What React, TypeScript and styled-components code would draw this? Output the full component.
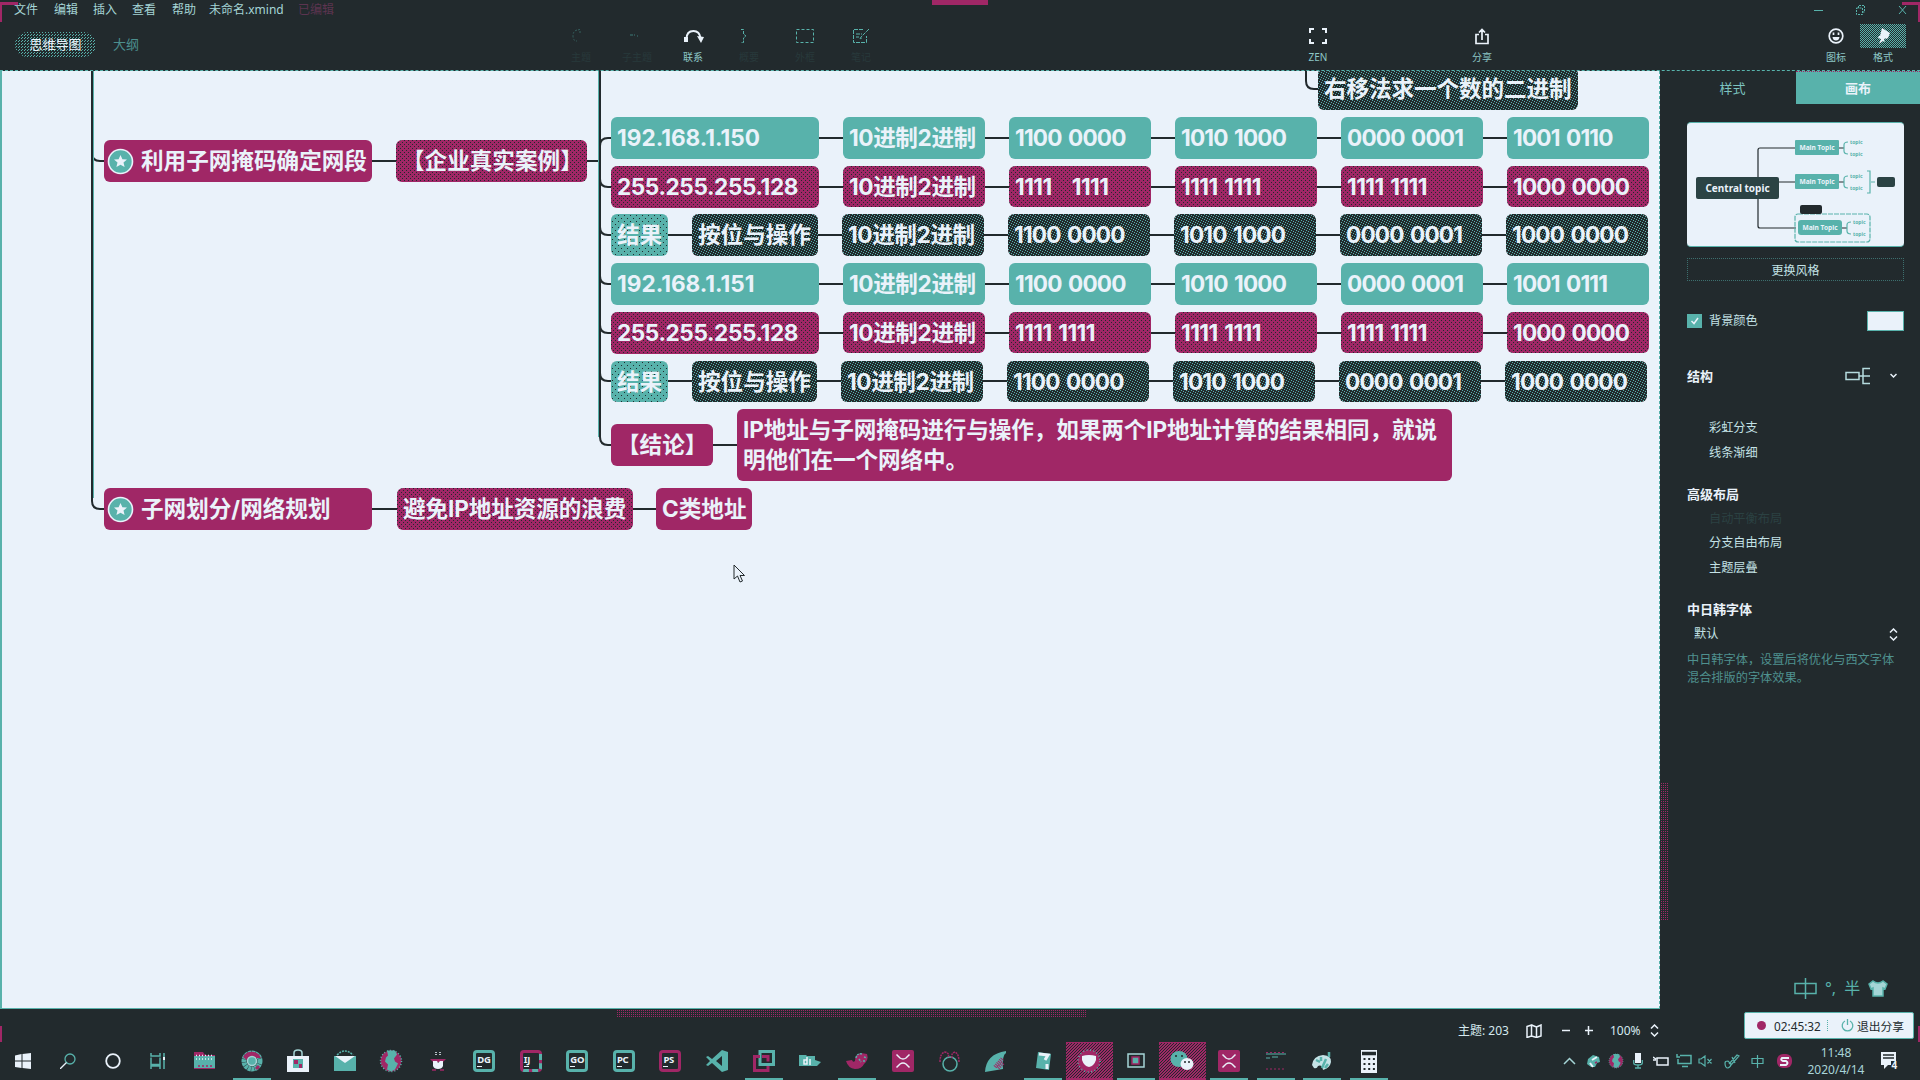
import React from 'react';
import styled, { createGlobalStyle, css } from 'styled-components';

const dark = '#222a2d';
const teal = '#58b2ab';
const plum = '#a02766';
const light = '#eaf2fa';
const dim = '#35605f';

const speckle = (color: string, size: number, points: number[][]) => css`
  background-image: ${points.map(() => `conic-gradient(from -90deg at 1px 1px, ${color} 90deg, transparent 0)`).join(',')};
  background-size: ${size}px ${size}px;
  background-position: ${points.map(([x, y]) => `${x}px ${y}px`).join(',')};
`;
const dense = [[0, 0], [2, 1], [4, 2], [1, 3], [3, 4]];
const checker = [[0, 0], [1, 1]];

const GlobalStyle = createGlobalStyle`
  * { box-sizing: border-box; }
  body { margin: 0; background: ${dark}; overflow: hidden; }
  svg { display: block; flex: none; }
`;

const Window = styled.div`
  width: 1920px;
  height: 1080px;
  display: flex;
  flex-direction: column;
  position: relative;
  background: ${dark};
  color: ${light};
  font: 12px/16px "Noto Sans", "Noto Sans CJK SC", sans-serif;
  white-space: pre;
`;

/* ---------- header ---------- */
const MenuBar = styled.div`
  height: 20px;
  display: flex;
  align-items: center;
  padding-left: 14px;
  color: #a5d5d6;
`;
const MenuItem = styled.span<{ $w: number; $faint?: boolean }>`
  width: ${p => p.$w}px;
  color: ${p => (p.$faint ? '#5c3450' : 'inherit')};
`;
const WindowButtons = styled.div`
  margin-left: auto;
  display: flex;
  gap: 33px;
  padding-right: 13px;
  color: ${teal};
`;
const Toolbar = styled.div`
  height: 51px;
  display: flex;
  border-bottom: 1px dashed ${teal};
`;
const ViewSwitch = styled.div`
  width: 553px;
  display: flex;
  padding: 12px 0 0 15px;
  font-size: 13px;
`;
const Pill = styled.div`
  width: 81px;
  height: 25px;
  border-radius: 13px;
  line-height: 25px;
  text-align: center;
  ${speckle(teal, 3, [[0, 0], [1, 2]])}
`;
const PlainView = styled.div`
  margin-left: 17px;
  line-height: 25px;
  color: #4c8f8d;
`;
const Tool = styled.div<{ $w?: number; $ml?: number; $faint?: boolean }>`
  width: ${p => p.$w ?? 56}px;
  margin-left: ${p => p.$ml ?? 0}px;
  padding-top: 4px;
  display: flex;
  flex-direction: column;
  align-items: center;
  font-size: 10px;
  line-height: 12px;
  color: ${p => (p.$faint ? '#28393b' : '#8dc7c6')};
`;
const ToolIcon = styled.div<{ $on?: boolean }>`
  width: 46px;
  height: 24px;
  margin-bottom: 3px;
  display: flex;
  align-items: center;
  justify-content: center;
  color: ${light};
  ${p => p.$on && css`${speckle(teal, 2, checker)}`}
`;

/* ---------- canvas ---------- */
const Main = styled.div`
  height: 938px;
  display: flex;
`;
const Canvas = styled.div`
  width: 1660px;
  position: relative;
  overflow: hidden;
  background: ${light};
  border-left: 2px solid ${teal};
  border-bottom: 1px solid ${teal};
  border-right: 1px dashed ${teal};
`;
const Links = styled.svg`
  position: absolute;
  left: -2px;
  top: 0;
`;
type Kind = 'teal' | 'tealDot' | 'plum' | 'plumDot' | 'dark';
const paint: Record<Kind, ReturnType<typeof css>> = {
  teal: css`background-color: ${teal};`,
  tealDot: css`background-color: ${teal}; ${speckle(dark, 6, [[1, 1], [4, 4]])}`,
  plum: css`background-color: ${plum};`,
  plumDot: css`background-color: ${plum}; ${speckle(dark, 4, [[0, 0], [2, 2]])}`,
  dark: css`background-color: ${dark}; ${speckle(teal, 5, dense)}`,
};
const Topic = styled.div<{ $x: number; $y: number; $w: number; $h: number; $kind: Kind; $ls: number }>`
  position: absolute;
  left: ${p => p.$x - 2}px;
  top: ${p => p.$y - 71}px;
  width: ${p => p.$w}px;
  height: ${p => p.$h}px;
  display: flex;
  align-items: center;
  padding-left: 6px;
  border-radius: 6px;
  font: 700 22.6px/30px Inter, "Noto Sans CJK SC", sans-serif;
  letter-spacing: ${p => p.$ls}px;
  word-spacing: 2px;
  ${p => paint[p.$kind]}
`;
const Marker = styled.svg`
  margin: 0 7px 0 -3px;
`;
const Pointer = styled.svg`
  position: absolute;
  left: 731px;
  top: 493px;
`;

type Node = { x: number; y: number; w: number; h?: number; kind: Kind; text: string; ls?: number; star?: boolean };
const cols = [843, 1009, 1175, 1341, 1507];
const spacing = (text: string) => (text.includes('0') ? -0.85 : -0.6);
const row = (y: number, kind: Kind, shift: number, texts: string[], h = 42): Node[] =>
  texts.map((text, i) => ({ x: cols[i] - shift, y, w: 142, h, kind, text, ls: i ? spacing(text) : -0.4 }));
const nodes: Node[] = [
  { x: 1318, y: 68, w: 260, kind: 'dark', text: '右移法求一个数的二进制', ls: -0.1 },
  { x: 104, y: 140, w: 268, kind: 'plum', text: '利用子网掩码确定网段', star: true },
  { x: 396, y: 140, w: 191, kind: 'plumDot', text: '【企业真实案例】' },
  { x: 611, y: 117, w: 208, kind: 'teal', text: '192.168.1.150' },
  ...row(117, 'teal', 0, ['10进制2进制', '1100 0000', '1010 1000', '0000 0001', '1001 0110']),
  { x: 611, y: 166, w: 208, kind: 'plumDot', text: '255.255.255.128', ls: -0.4 },
  ...row(166, 'plumDot', 0, ['10进制2进制', '1111   1111', '1111 1111', '1111 1111', '1000 0000'], 41),
  { x: 611, y: 214, w: 57, kind: 'tealDot', text: '结果' },
  { x: 692, y: 214, w: 126, kind: 'dark', text: '按位与操作' },
  ...row(214, 'dark', 1, ['10进制2进制', '1100 0000', '1010 1000', '0000 0001', '1000 0000']),
  { x: 611, y: 263, w: 208, kind: 'teal', text: '192.168.1.151' },
  ...row(263, 'teal', 0, ['10进制2进制', '1100 0000', '1010 1000', '0000 0001', '1001 0111']),
  { x: 611, y: 312, w: 208, kind: 'plumDot', text: '255.255.255.128', ls: -0.4 },
  ...row(312, 'plumDot', 0, ['10进制2进制', '1111 1111', '1111 1111', '1111 1111', '1000 0000'], 41),
  { x: 611, y: 361, w: 57, h: 41, kind: 'tealDot', text: '结果' },
  { x: 692, y: 361, w: 125, h: 41, kind: 'dark', text: '按位与操作' },
  ...row(361, 'dark', 2, ['10进制2进制', '1100 0000', '1010 1000', '0000 0001', '1000 0000'], 41),
  { x: 611, y: 424, w: 102, kind: 'plum', text: '【结论】' },
  { x: 737, y: 409, w: 715, h: 72, kind: 'plum', text: 'IP地址与子网掩码进行与操作，如果两个IP地址计算的结果相同，就说\n明他们在一个网络中。', ls: -0.1 },
  { x: 104, y: 488, w: 268, kind: 'plum', text: '子网划分/网络规划', star: true },
  { x: 397, y: 488, w: 236, kind: 'plumDot', text: '避免IP地址资源的浪费', ls: -0.1 },
  { x: 656, y: 488, w: 96, kind: 'plum', text: 'C类地址' },
];
const rowLines = [138, 187, 235, 284, 333, 381];

/* ---------- sidebar ---------- */
const TrackY = styled.div`
  width: 9px;
  padding: 712px 0 0 1px;
`;
const ThumbY = styled.div`
  width: 7px;
  height: 138px;
  ${speckle(plum, 2, [[0, 0]])}
`;
const Panel = styled.div`
  width: 251px;
  display: flex;
  flex-direction: column;
`;
const Tabs = styled.div`
  display: flex;
  height: 33px;
  line-height: 34px;
  font-size: 13px;
  text-align: center;
`;
const Tab = styled.div<{ $active?: boolean }>`
  width: ${p => (p.$active ? 124 : 127)}px;
  background: ${p => (p.$active ? teal : 'none')};
  color: ${p => (p.$active ? light : '#7cc3c0')};
  font-weight: ${p => (p.$active ? 700 : 400)};
  ${p => p.$active && css`border-top: 1px dotted ${plum}; line-height: 32px;`}
`;
const Fields = styled.div`
  padding: 18px 16px 0 18px;
  display: flex;
  flex-direction: column;
`;
const Preview = styled.div`
  height: 125px;
  border-radius: 4px;
  background: ${light};
  border-top: 1px solid ${teal};
  border-bottom: 1px solid ${teal};
`;
const StyleButton = styled.div`
  height: 23px;
  margin-top: 11px;
  border: 1px dotted #3d6f6e;
  text-align: center;
  line-height: 23px;
  color: #c4e2e6;
`;
const Line = styled.div<{ $h: number; $mt?: number; $pl?: number; $faint?: boolean }>`
  height: ${p => p.$h}px;
  margin-top: ${p => p.$mt ?? 0}px;
  padding-left: ${p => p.$pl ?? 22}px;
  display: flex;
  align-items: center;
  font-size: 12.2px;
  color: ${p => (p.$faint ? '#2b4142' : '#c4e2e6')};
`;
const Title = styled(Line)`
  padding-left: 0;
  font-size: 13px;
  font-weight: 700;
  color: ${light};
`;
const Check = styled.div`
  width: 15px;
  height: 14px;
  margin-right: 7px;
  background: ${teal};
`;
const Swatch = styled.div`
  margin-left: auto;
  width: 37px;
  height: 20px;
  background: ${light};
  border: 1px solid ${teal};
`;
const Right = styled.div<{ $gap: number; $pr: number }>`
  margin-left: auto;
  display: flex;
  align-items: center;
  gap: ${p => p.$gap}px;
  padding-right: ${p => p.$pr}px;
`;
const Note = styled.div`
  margin-top: 6px;
  font-size: 12.2px;
  line-height: 18px;
  color: #4f918f;
`;
const Ime = styled.div`
  margin: auto 0 9px 124px;
  height: 24px;
  display: flex;
  align-items: center;
  gap: 8px;
  color: ${teal};
  font-size: 16px;
`;

/* ---------- status bar & taskbar ---------- */
const Status = styled.div`
  height: 33px;
  display: flex;
`;
const TrackX = styled.div`
  width: 1458px;
  padding: 1px 0 0 617px;
`;
const ThumbX = styled.div`
  width: 469px;
  height: 8px;
  ${speckle(plum, 2, [[0, 0]])}
`;
const StatusItems = styled.div`
  width: 286px;
  display: flex;
  align-items: center;
  padding-top: 10px;
  color: #d5e9ef;
`;
const Cell = styled.div<{ $w: number }>`
  width: ${p => p.$w}px;
`;
const ShareBox = styled.div`
  width: 170px;
  height: 27px;
  margin-top: 3px;
  padding: 0 0 0 12px;
  display: flex;
  align-items: center;
  border-radius: 2px;
  border: 1px solid ${teal};
  background: ${light};
  color: ${dark};
  font-size: 11.8px;
`;
const Dot = styled.span`
  flex: none;
  width: 9px;
  height: 9px;
  border-radius: 50%;
  background: ${plum};
  margin-right: 8px;
`;
const Divider = styled.span`
  height: 11px;
  border-left: 1px dotted ${teal};
  margin: 0 13px 0 6px;
`;
const Taskbar = styled.div`
  height: 38px;
  display: flex;
`;
const TaskItem = styled.div<{ $w?: number; $hot?: boolean; $run?: boolean }>`
  width: ${p => p.$w ?? 46.55}px;
  display: flex;
  align-items: center;
  justify-content: center;
  box-shadow: ${p => (p.$hot ? `inset 0 1px ${plum}, inset 0 -2px ${plum}` : 'none')};
  ${p => p.$run && css`
    background: linear-gradient(${teal}, ${teal}) center bottom / 38px 2px no-repeat;
  `}
  ${p => p.$hot && css`background-color: ${plum}; ${speckle(dark, 3, [[0, 0], [2, 1], [1, 2]])}`}
`;
const Badge = styled.div<{ $c: string; $d: string }>`
  width: 22px;
  height: 22px;
  border: 3px dashed ${p => p.$c};
  border-right-color: ${p => p.$d};
  border-bottom-color: ${p => p.$d};
  border-radius: 4px;
  display: flex;
  flex-direction: column;
  padding: 2px 0 0 1px;
  font: 700 9.5px/9px "Noto Sans", sans-serif;
  letter-spacing: -0.3px;
  background: linear-gradient(${dark}, ${dark}) padding-box, ${p => p.$c} border-box;

  &::after {
    content: '';
    width: 5px;
    height: 1px;
    margin-top: 2px;
    background: ${light};
  }
`;
const Tray = styled.div`
  margin-left: auto;
  display: flex;
  align-items: center;
  width: 357px;
`;
const Clock = styled.div`
  width: 72px;
  text-align: center;
  font-size: 12px;
  line-height: 17px;
  color: #a9d4d8;
`;
const Corner = styled.div<{ $x: number; $y: number; $w: number; $h: number }>`
  position: absolute;
  left: ${p => p.$x}px;
  top: ${p => p.$y}px;
  width: ${p => p.$w}px;
  height: ${p => p.$h}px;
  background: ${plum};
`;

type IconProps = { w?: number; h?: number; vb?: string; c?: string; sw?: number; children: React.ReactNode };
const Icon = ({ w = 24, h = 24, vb, c = light, sw = 1.5, children }: IconProps) => (
  <svg width={w} height={h} viewBox={vb ?? `0 0 ${w} ${h}`} fill="none" stroke={c} strokeWidth={sw}>{children}</svg>
);
const UpDown = () => (
  <Icon w={9} h={13}><path d="M1 4.5 4.5 1 8 4.5M1 8.5 4.5 12 8 8.5" /></Icon>
);
const XmindIcon = () => (
  <Icon><rect x="1" y="1" width="22" height="22" rx="2" fill={plum} stroke="none" /><path d="M5.500 5.500 9 9q3 2 6 0l3.500-3.500M5.500 18.500 9 15q3-2 6 0l3.500 3.500" /></Icon>
);
const Globe = ({ s = 24 }: { s?: number }) => (
  <Icon w={s} h={s} vb="0 0 24 24">
    <circle cx="12" cy="12" r="10.5" fill={plum} stroke={teal} strokeDasharray="1 2" />
    <path d="M8 1.500h8l2 4-3 4 1 3 3 2-3 6-4 2-4-2 1-5-3-3 1-4 2-2z" fill={teal} stroke="none" />
  </Icon>
);
const Star = () => (
  <Marker width="27" height="27" viewBox="0 0 27 27">
    <circle cx="13.5" cy="13.5" r="12" fill={teal} stroke={light} strokeWidth="1.6" />
    <path d="m13.5 7 1.9 4.2 4.6.4-3.5 3 1.1 4.5-4.1-2.4-4.1 2.4 1.1-4.5-3.5-3 4.6-.4z" fill={light} />
  </Marker>
);

const PreviewMap = () => (
  <svg width="217" height="123" viewBox="0 0 217 123" fontFamily="Noto Sans, sans-serif" fontWeight="700">
    <g fill="none" stroke={dark} strokeWidth="1.2">
      <path d="M71 54V27q0-2 2-2h35M92 59h16M71 76v27q0 2 2 2h36M152 25h5M152 59h5M155 105h5" />
    </g>
    <g fill="none" stroke={teal} strokeWidth="1.2">
      <path d="M161 19q-4 0-4 3v6q0 3 4 3M161 53q-4 0-4 3v6q0 3 4 3M164 99q-4 0-4 3v6q0 3 4 3M180 48h3v22h-3M184 59h4" />
      <rect x="108" y="91" width="75" height="28" rx="3" strokeDasharray="5 1" />
    </g>
    <rect x="9" y="54" width="83" height="22" rx="2" fill="#2b4344" />
    <text x="50.5" y="69" fontSize="10" textAnchor="middle" fill={light}>Central topic</text>
    <rect x="108" y="17" width="44" height="15" rx="1" fill={teal} />
    <rect x="108" y="51" width="44" height="15" rx="1" fill={teal} />
    <rect x="111" y="97" width="44" height="15" rx="3" fill={teal} />
    <g fontSize="6.6" fill={light} textAnchor="middle">
      <text x="130" y="27">Main Topic</text>
      <text x="130" y="61">Main Topic</text>
      <text x="133" y="107">Main Topic</text>
    </g>
    <g fontSize="5" fill={teal} fontWeight="700">
      <text x="163" y="21">topic</text><text x="163" y="33">topic</text>
      <text x="163" y="55">topic</text><text x="163" y="67">topic</text>
      <text x="166" y="101">topic</text><text x="166" y="113">topic</text>
    </g>
    <rect x="190" y="54" width="18" height="10" rx="2" fill="#2b4344" />
    <rect x="113" y="82" width="22" height="9" rx="2" fill={dark} />
  </svg>
);

const Header = () => (
  <>
    <MenuBar>
      <MenuItem $w={40}>文件</MenuItem>
      <MenuItem $w={39}>编辑</MenuItem>
      <MenuItem $w={39}>插入</MenuItem>
      <MenuItem $w={40}>查看</MenuItem>
      <MenuItem $w={37}>帮助</MenuItem>
      <MenuItem $w={89}>未命名.xmind</MenuItem>
      <MenuItem $w={40} $faint>已编辑</MenuItem>
      <WindowButtons>
        <Icon w={9} h={10} c={teal} sw={1}><path d="M0 5.500h9" /></Icon>
        <Icon w={9} h={10} c={teal} sw={1}><path d="M.5 3h6v6.500h-6zM2.500 3V.5h6V7h-2" strokeDasharray="2 1" /></Icon>
        <Icon w={9} h={10} c={teal} sw={1}><path d="m1 1 7 8M8 1 1 9" /></Icon>
      </WindowButtons>
    </MenuBar>
    <Toolbar>
      <ViewSwitch>
        <Pill>思维导图</Pill>
        <PlainView>大纲</PlainView>
      </ViewSwitch>
      <Tool $faint><ToolIcon><Icon w={22} h={16} c={dim} sw={1}><path d="M7 2Q3 3 3 8t4 5M8 2l3-1M10 5V2" strokeDasharray="2 1.500" /></Icon></ToolIcon>主题</Tool>
      <Tool $faint><ToolIcon><Icon w={22} h={16} c={dim} sw={1.500}><path d="M4 7h3M8 7h1M11 8h1" /></Icon></ToolIcon>子主题</Tool>
      <Tool>
        <ToolIcon><Icon w={21} h={16} sw={2}><path d="M3.500 11q0-8 7-8 6 0 7 7" /><path d="M1 9h4v5H1zM14 8l7 1-3 6z" fill={light} stroke="none" /></Icon></ToolIcon>联系
      </Tool>
      <Tool $faint><ToolIcon><Icon w={22} h={16} c={teal} sw={1}><path d="M3 1.500h2.500V6L8 8l-2.500 2v4.500H3" strokeDasharray="3 1" /></Icon></ToolIcon>概要</Tool>
      <Tool $faint><ToolIcon><Icon w={20} h={16} c={teal} sw={1}><path d="M1.500 1.500h17v13h-17z" strokeDasharray="3 2" /></Icon></ToolIcon>外框</Tool>
      <Tool $faint><ToolIcon><Icon w={18} h={16} c={teal} sw={1}><path d="M11 1.500H1.500v13h13V8M4 6h6M4 9h3M17 1l-8 8-1 2 2-1" strokeDasharray="4 1" /></Icon></ToolIcon>笔记</Tool>
      <Tool $ml={401}>
        <ToolIcon><Icon w={18} h={16} sw={2}><path d="M1 5V1h4M13 1h4v4M17 11v4h-4M5 15H1v-4" /></Icon></ToolIcon>ZEN
      </Tool>
      <Tool $ml={108}>
        <ToolIcon><Icon w={16} h={17} sw={1.700}><path d="M5 6.500H2v9h12v-9h-3M8 12V2M5 4.500 8 1.500l3 3" /></Icon></ToolIcon>分享
      </Tool>
      <Tool $w={48} $ml={302}>
        <ToolIcon><Icon w={16} h={16} sw={1.700}><circle cx="8" cy="8" r="6.800" /><path d="M5.500 4.500v2.500M10.500 4.500v2.500" /><path d="M4.500 9h7q-.5 3.500-3.500 3.500T4.500 9z" fill={light} stroke="none" /></Icon></ToolIcon>图标
      </Tool>
      <Tool $w={46}>
        <ToolIcon $on><Icon w={16} h={16}><path d="m7 0 8 5-2 5-2 1-1-1-1 2 1 2-2-1-4 3 2-5-3-1 1-2 1 0z" fill={light} stroke="none" /></Icon></ToolIcon>格式
      </Tool>
    </Toolbar>
  </>
);

const MindMap = () => (
  <Canvas>
    <Links width="1660" height="938" viewBox="0 71 1660 938" fill="none" stroke={dark} strokeWidth="2">
      <path d="M92 71V501q0 8 8 8h4M92 153q0 8 8 8h4M600 71V437q0 8 8 8h4M1306 71v10q0 8 8 8h5" />
      <path d="M372 161h24M587 161h13M712 445h25M372 509h25M632 509h24" />
      <path d="M600 146q0-8 8-8h4" />
      {rowLines.slice(1).map(y => <path key={y} d={`M600 ${y - 8}q0 8 8 8h4`} />)}
      {rowLines.map(y => <path key={y} d={`M640 ${y}H1520`} />)}
      <path d="M93.500 71V498M598.500 71V437" stroke={teal} strokeWidth="1" />
    </Links>
    {nodes.map((n, i) => (
      <Topic key={i} $x={n.x} $y={n.y} $w={n.w} $h={n.h ?? 42} $kind={n.kind} $ls={n.ls ?? 0}>
        {n.star && <Star />}{n.text}
      </Topic>
    ))}
    <Pointer width="13" height="19" viewBox="0 0 13 19" fill={light} stroke={dark}>
      <path d="M1 1v14l3.500-3 2.500 6 2.500-1-2.500-5.500h4.500z" />
    </Pointer>
  </Canvas>
);

const Sidebar = () => (
  <Panel>
    <Tabs><Tab>样式</Tab><Tab $active>画布</Tab></Tabs>
    <Fields>
      <Preview><PreviewMap /></Preview>
      <StyleButton>更换风格</StyleButton>
      <Line $h={20} $mt={30} $pl={0}>
        <Check><Icon w={15} h={14}><path d="m4.500 7 2.500 2.500L11 4" /></Icon></Check>背景颜色<Swatch />
      </Line>
      <Title $h={20} $mt={35}>
        结构
        <Right $gap={19} $pr={7}>
          <Icon w={26} h={18} c="#b5dbde"><path d="M1 5.500h13v7H1zM14 9h11M25 1.500h-7v15h7" /></Icon>
          <Icon w={7} h={6}><path d="m.5 1 3 3 3-3" /></Icon>
        </Right>
      </Title>
      <Line $h={24} $mt={30}>彩虹分支</Line>
      <Line $h={26}>线条渐细</Line>
      <Title $h={20} $mt={18}>高级布局</Title>
      <Line $h={24} $mt={3} $faint>自动平衡布局</Line>
      <Line $h={24}>分支自由布局</Line>
      <Line $h={26}>主题层叠</Line>
      <Title $h={20} $mt={18}>中日韩字体</Title>
      <Line $h={22} $mt={4} $pl={7}>默认<Right $gap={0} $pr={6}><UpDown /></Right></Line>
      <Note>{'中日韩字体，设置后将优化与西文字体\n混合排版的字体效果。'}</Note>
    </Fields>
    <Ime>
      <Icon w={24} h={21} c={teal}><path d="M2 5.500h21v10H2zM12.500 0v21" /></Icon>
      <span>°,</span>
      <span>半</span>
      <Icon w={20} h={17} c={teal}><path d="m1 4 4-3q5 4 10 0l4 3-2 5-2-1v8H5V8L3 9z" fill="#a5d5d6" /></Icon>
    </Ime>
  </Panel>
);

const StatusBar = () => (
  <Status>
    <TrackX><ThumbX /></TrackX>
    <StatusItems>
      <Cell $w={68}>主题: 203</Cell>
      <Cell $w={36}><Icon w={16} h={14}><path d="M1 2.500 5.500 1v11L1 13.500zM5.500 1 10.500 3v10.500L5.500 12M10.500 3 15 1v11l-4.500 1.500" /></Icon></Cell>
      <Cell $w={22}><Icon w={9} h={9}><path d="M0 4.500h8" /></Icon></Cell>
      <Cell $w={26}><Icon w={9} h={9}><path d="M1 4.500h8M4.500 0v9" /></Icon></Cell>
      <Cell $w={40}>100%</Cell>
      <UpDown />
    </StatusItems>
    <ShareBox>
      <Dot />02:45:32<Divider />
      <Icon w={13} h={13} c={teal} sw={1.300}><path d="M4 2a5.300 5.300 0 1 0 5 0M6.500 0v6" /></Icon> 退出分享
    </ShareBox>
  </Status>
);

const TaskbarRow = () => (
  <Taskbar>
    <TaskItem $w={45}><Icon w={16} h={16}><path d="M0 2.500 6.500 1v6.500H0zM7.500 1 16 0v7.500H7.500zM0 8.500h6.500V15L0 14zM7.500 8.500H16V16l-8.500-1z" fill={light} stroke="none" /></Icon></TaskItem>
    <TaskItem $w={45}><Icon w={16} h={16} c={teal} sw={1.300}><circle cx="10" cy="6" r="5" /><path d="M6.500 9.500 0 16" stroke={light} /></Icon></TaskItem>
    <TaskItem $w={45}><Icon w={16} h={16} sw={1.800}><circle cx="8" cy="8" r="6.800" /></Icon></TaskItem>
    <TaskItem $w={46.7}><Icon w={16} h={16} c={teal}><path d="M1 0v3h9V0M1 16v-3h9v3M1 4.500v7h9v-7M14 0v16" /><path d="M14 4v3" stroke={light} strokeWidth="2" /></Icon></TaskItem>
    <TaskItem>
      <Icon w={22} h={18}><path d="M0 0h9l2 3h10v14H0z" fill={plum} stroke="none" /><path d="M0 4h21v12H0z" fill={teal} stroke="none" /><path d="M2 3.500h18M2 7h18" stroke={light} strokeWidth="1.500" strokeDasharray="1 2" /><path d="M4 14h14" stroke={plum} strokeDasharray="2 2" /></Icon>
    </TaskItem>
    <TaskItem $run>
      <Icon w={22} h={22}><circle cx="11" cy="11" r="8" stroke={teal} strokeWidth="5" strokeDasharray="3 .4" /><path d="M2 7a10 10 0 0 1 18 1h-9q-3 0-4 3z" fill={plum} stroke="none" /><circle cx="11" cy="11" r="4.500" fill={teal} stroke="#a5d5d6" /><path d="M15 19l3-3" stroke={plum} strokeWidth="3" /></Icon>
    </TaskItem>
    <TaskItem>
      <Icon w={24} h={24}><path d="M8 7V4q0-3 4-3t4 3v3" stroke="#a5d5d6" /><path d="M1 7h22v16H1z" fill={light} stroke="none" /><path d="M7 10h10v9H7z" fill={teal} stroke="none" /><path d="M8 11h4v4H8zM13 15h3v4h-3z" fill={plum} stroke="none" /></Icon>
    </TaskItem>
    <TaskItem><Icon w={24} h={22}><path d="M4 5q4-4 8-4t8 4" stroke={teal} strokeDasharray="2 1" /><path d="M1 6h22v15H1z" fill={teal} stroke="none" /><path d="M2 6h20l-10 7z" fill={light} stroke="none" /></Icon></TaskItem>
    <TaskItem><Globe /></TaskItem>
    <TaskItem>
      <Icon w={16} h={20}><path d="M6 1v4M10 1v4" strokeDasharray="1 1" /><path d="M0 8h16l-3 3H3z" fill={plum} stroke="none" /><path d="M3 10h4l1 2 2-2h3v5q-1 3-5 3t-5-3z" fill={light} stroke="none" /><path d="M2 19h4M10 19h4" stroke={plum} /></Icon>
    </TaskItem>
    <TaskItem><Badge $c={teal} $d={teal}>DG</Badge></TaskItem>
    <TaskItem><Badge $c={plum} $d={teal}>IJ</Badge></TaskItem>
    <TaskItem><Badge $c={teal} $d={teal}>GO</Badge></TaskItem>
    <TaskItem><Badge $c={teal} $d={teal}>PC</Badge></TaskItem>
    <TaskItem><Badge $c={plum} $d={plum}>PS</Badge></TaskItem>
    <TaskItem><Icon w={22} h={22}><path d="m16 0 6 2v18l-6 2L6 13l-4 3-2-1 4-4-4-4 2-1 4 3zm0 6-6 5 6 5z" fill={teal} fillRule="evenodd" stroke="none" /></Icon></TaskItem>
    <TaskItem $run><Icon w={24} h={24} sw={3}><path d="M8 2.500h13.500v13H8z" stroke={teal} /><path d="M8 7.500H2.500v14H16V17M10 7.500h6v5" stroke={plum} /></Icon></TaskItem>
    <TaskItem><Icon w={22} h={16}><path d="M0 2h7l1 1h8v4l6 2-4 4H0z" fill={teal} stroke="none" /><path d="M8 7H5v4h3zM8 11V4M11 6v6" /></Icon></TaskItem>
    <TaskItem $run><Icon w={22} h={18}><path d="M0 9l6-1q1 3 3 1 0-7 6-8l6 1q2 6-3 10-2 5-9 5Q2 16 0 9z" fill={plum} stroke="none" /><path d="M10 6q1-5 6-4M18 5l3 1M13 7l2 3M18 8v3" stroke={teal} strokeDasharray="2 1" /></Icon></TaskItem>
    <TaskItem><XmindIcon /></TaskItem>
    <TaskItem><Icon w={22} h={22} c={teal}><circle cx="11" cy="14" r="7" /><path d="M1 12Q1 3 6 2q5 1 3 6M20 12q0-8-4-10-4 1-3 6" stroke={plum} strokeDasharray="2 .8" /></Icon></TaskItem>
    <TaskItem><Icon w={22} h={22}><path d="M0 22Q1 4 21 1v2q-4 2-3 16z" fill={teal} stroke="none" /><path d="M10 17l8-9M13 18l5-5" stroke={plum} strokeDasharray="1 1" strokeWidth="4" /></Icon></TaskItem>
    <TaskItem $run><Icon w={18} h={20}><path d="m4 1 13 2-2 16-13-2z" fill={teal} stroke="none" /><path d="m5 3 9 1-3 5M13 13v5" strokeWidth="3" stroke={light} /></Icon></TaskItem>
    <TaskItem $hot><Icon w={24} h={24}><circle cx="12" cy="12" r="11" fill={plum} stroke={teal} strokeDasharray="1 2.500" /><path d="M5 7q7-2 14 0v4q-2 6-7 7-5-1-7-7z" fill={light} stroke="none" /></Icon></TaskItem>
    <TaskItem $run><Icon w={18} h={16} c="#a5d5d6"><path d="M1 1h16v13H1z" /><path d="M5 4h7v7H5z" fill={teal} stroke={plum} /></Icon></TaskItem>
    <TaskItem $hot><Icon w={24} h={22}><ellipse cx="9" cy="9" rx="8.500" ry="8" fill={teal} stroke="none" /><ellipse cx="17" cy="14" rx="6.500" ry="6" fill={light} stroke="none" /><path d="M6 5v2M12 5v2M15 11v2M19 11v2" stroke={dark} /></Icon></TaskItem>
    <TaskItem $run><XmindIcon /></TaskItem>
    <TaskItem $run><Icon w={22} h={18} c={teal} sw={1}><path d="M1 2h20M1 6h4M7 5h6" /><path d="M1 .5h20M1 17h20" stroke={plum} strokeDasharray="2 2" /></Icon></TaskItem>
    <TaskItem $run><Icon w={22} h={20}><path d="M1 14Q2 5 12 4q9 1 8 7-1 6-8 8-1-6-5-4-1 3-4 2z" fill="#c4e2e6" stroke="none" /><path d="M5 9l4 2M10 6v4M15 8l-4 9M18 1v5M17 13l-3 4" stroke={teal} strokeWidth="2.500" /></Icon></TaskItem>
    <TaskItem $run>
      <Icon w={16} h={23}><path d="M0 0h16v23H0z" fill={light} stroke="none" /><path d="M1 3.500h14" stroke={dark} strokeWidth="3.500" /><path d="M2.500 9h12M2.500 14h12M2.500 19h12" stroke={dark} strokeWidth="2" strokeDasharray="2 2.700" /></Icon>
    </TaskItem>
    <Tray>
      <Cell $w={23}><Icon w={13} h={8} c="#a5d5d6"><path d="M1 7 6.500 1.500 12 7" /></Icon></Cell>
      <Cell $w={22}><Icon w={15} h={15}><path d="M2 5l5-4 6 2 1 5-3 1-2 4H5L1 10z" fill={teal} stroke="none" /><path d="M6 6l5-3M4 9l3 4" strokeWidth="2" stroke={light} /><path d="M9 9l2-1" stroke={plum} /></Icon></Cell>
      <Cell $w={25}><Globe s={16} /></Cell>
      <Cell $w={20}><Icon w={10} h={16} c={teal} sw={1.300}><path d="M2 0h6v10H2z" fill={light} stroke="none" /><path d="M.7 7v3q0 2 4.300 2t4.300-2V7M5 12v3M2 15h6" /></Icon></Cell>
      <Cell $w={23}><Icon w={16} h={12}><path d="M4 3h11v7H4zM0 2l3 2M0 5h3" /></Icon></Cell>
      <Cell $w={22}><Icon w={16} h={14} c={teal}><path d="M4 1.500h11v8H2V5M6 12.500h6M1 0v3h3" /></Icon></Cell>
      <Cell $w={26}><Icon w={15} h={12} c={teal} sw={1.200}><path d="M1 4h2l4-3v10L3 8H1zM9.500 4l4 4.500M13.500 4l-4 4.500" /></Icon></Cell>
      <Cell $w={27}><Icon w={16} h={15} c={teal} sw={1.200}><path d="M1 9q0-2 3-2l3 3q0 3-3 4-3 0-3-5zM5 10l8-9 2 1-8 9M8 3l3 6" /></Icon></Cell>
      <Cell $w={26}><Icon w={13} h={13} c={teal} sw={1.200}><path d="M1 3.500h11v5H1zM6.500 0v13" /></Icon></Cell>
      <Cell $w={23}><Icon w={15} h={14}><rect width="15" height="14" rx="6" fill={plum} stroke="none" /><path d="M12 4H5q-2 2 1 3h3q3 2 0 4H3" strokeWidth="2" /></Icon></Cell>
      <Clock>{'11:48\n2020/4/14'}</Clock>
      <Cell $w={40}>
        <Icon w={30} h={19} vb="-9 0 30 19"><path d="M0 0h15v9h-5v4H7l-4 4v-4H0z" fill={light} stroke="none" /><path d="M2 3h11M2 6h11" stroke={dark} /><text x="10.500" y="17" fontSize="10" fontWeight="700" fill={light} stroke="none">4</text></Icon>
      </Cell>
    </Tray>
  </Taskbar>
);

export default function App() {
  return (
    <Window>
      <GlobalStyle />
      <Header />
      <Main>
        <MindMap />
        <TrackY><ThumbY /></TrackY>
        <Sidebar />
      </Main>
      <StatusBar />
      <TaskbarRow />
      <Corner $x={0} $y={2} $w={18} $h={3} />
      <Corner $x={0} $y={2} $w={2} $h={20} />
      <Corner $x={932} $y={0} $w={56} $h={5} />
      <Corner $x={1902} $y={2} $w={18} $h={3} />
      <Corner $x={1918} $y={2} $w={2} $h={20} />
      <Corner $x={0} $y={1026} $w={2} $h={16} />
      <Corner $x={1918} $y={1026} $w={2} $h={16} />
    </Window>
  );
}
